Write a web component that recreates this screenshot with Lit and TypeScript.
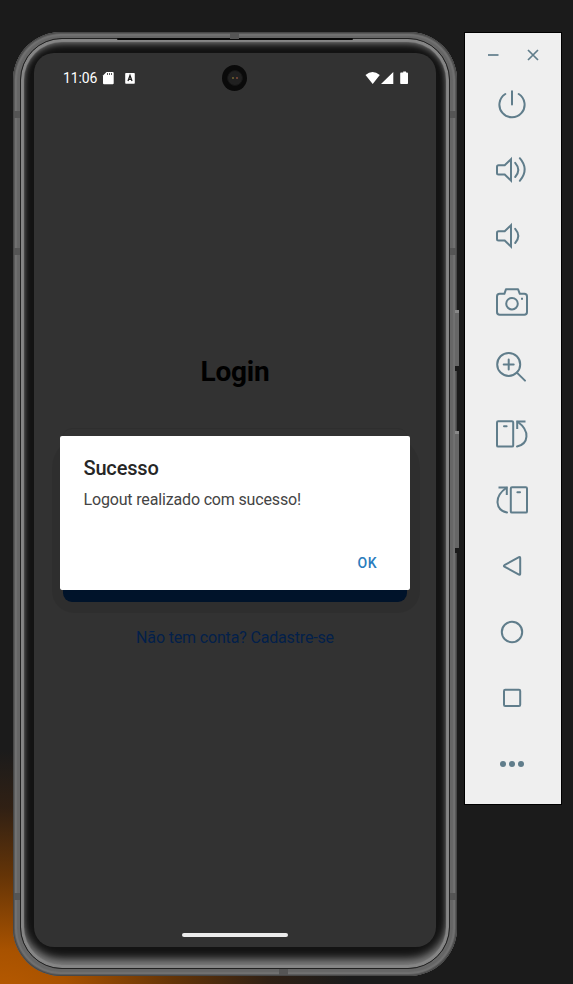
import { LitElement, html, css, svg } from "lit";
import { customElement } from "lit/decorators.js";

@customElement("phone-screen")
class PhoneScreen extends LitElement {
  static styles = css`
    :host { display: block; position: relative; width: 402px; height: 894px; background: #323232; border-radius: 20px; overflow: hidden; font-family: Roboto, sans-serif; }
    .status { height: 50px; box-sizing: border-box; padding: 0 27px 0 29px; display: flex; align-items: center; justify-content: space-between; color: #fff; font-size: 14px; }
    .group { display: flex; align-items: center; }
    .time { letter-spacing: -0.1px; }
    .status svg { display: block; }
    .camera { position: absolute; left: 188px; top: 12px; width: 25px; height: 26px; border-radius: 50%; background: #0a0a0a; display: grid; place-items: center; }
    .lens { width: 14px; height: 14px; border-radius: 50%; background: #202020; border: 1px solid #161616; display: flex; align-items: center; justify-content: center; gap: 2px; }
    .glint { width: 2px; height: 2px; border-radius: 50%; background: #746631; }
    .glint.red { background: #80493a; }
    .page { display: flex; flex-direction: column; align-items: center; padding-top: 252px; }
    h1 { margin: 0; font-size: 28px; line-height: 34px; font-weight: 700; letter-spacing: -0.2px; color: #000; }
    .form { margin-top: 39px; width: 344px; height: 174px; box-sizing: border-box; border: 1px solid #2e2e2e; border-width: 1px 0 0; border-radius: 9px; overflow: hidden; display: flex; align-items: flex-end; }
    .submit { width: 100%; height: 44px; background: #00152e; }
    .link { margin-top: 26px; font-size: 16px; line-height: 20px; letter-spacing: -0.16px; color: #03204a; white-space: nowrap; }
    .shade { position: absolute; left: 18px; top: 383px; width: 368px; height: 177px; border-radius: 32px 32px 22px 22px; background: rgba(0, 0, 0, .07); }
    .dialog { position: absolute; left: 25.5px; top: 383px; width: 350px; height: 154px; box-sizing: border-box; border-radius: 2px; background: #fff; padding: 20px 24px 0; display: flex; flex-direction: column; }
    h2 { margin: 0; font-size: 20px; line-height: 24px; font-weight: 500; letter-spacing: -0.18px; color: #262626; }
    .msg { margin-top: 10px; font-size: 16px; line-height: 20px; letter-spacing: -0.16px; color: #444; }
    .ok { margin: 43px 8px 0 0; align-self: flex-end; font-size: 14px; line-height: 20px; font-weight: 500; letter-spacing: .8px; color: #2a7cbd; }
    .home { position: absolute; left: 147.5px; top: 880px; width: 106px; height: 4px; border-radius: 2px; background: #ececec; }
  `;
  render() {
    return html`
      <div class="status">
        <div class="group">
          <span class="time">11:06</span>
          <svg width="40" height="16" viewBox="0 0 40 16">
            <path fill="#fff" d="M9.5 2H15.7Q16.7 2 16.7 3V13.2Q16.7 14.2 15.7 14.2H7Q6 14.2 6 13.2V5.5Z" />
            <path stroke="#323232" stroke-width=".8" d="M10.5 3V5M12.5 3V5M14.5 3V5" />
            <rect x="28.2" y="3" width="9.6" height="10.8" rx=".8" fill="#fff" />
            <path fill="none" stroke="#222" stroke-width="1.3" d="M31 11L33 5.5L35 11M31.7 9.4H34.3" />
          </svg>
        </div>
        <svg width="44" height="16" viewBox="0 0 44 16">
          <path fill="#fff" d="M.5 5Q7.5-.8 14.8 5L7.7 14ZM16 14L28.3 2V14ZM37 2.6H38.2V1.5H41V2.6H42Q43 2.6 43 3.6V13.2Q43 14 42.2 14H36Q35.2 14 35.2 13.2V3.6Q35.2 2.6 36 2.6Z" />
        </svg>
      </div>
      <div class="camera"><div class="lens"><i class="glint"></i><i class="glint red"></i></div></div>
      <div class="page">
        <h1>Login</h1>
        <div class="form"><div class="submit"></div></div>
        <div class="link">Não tem conta? Cadastre-se</div>
      </div>
      <div class="shade"></div>
      <div class="dialog">
        <h2>Sucesso</h2>
        <div class="msg">Logout realizado com sucesso!</div>
        <div class="ok">OK</div>
      </div>
      <div class="home"></div>
    `;
  }
}

const speaker = svg`<path stroke-linejoin="miter" d="M19 9.2L12.7 15.3H6.5Q5 15.3 5 16.8V23Q5 24.5 6.5 24.5H12.7L19 30.6Z"/><path d="M23.2 12.8Q29.4 19.8 23.2 27"/>`;
const device = svg`<rect x="5" y="7.2" width="16.2" height="25.4" rx="1.2"/><path d="M12 12.2H14.6"/>`;
const arrow = svg`<path stroke-linecap="butt" stroke-linejoin="miter" d="M25.2 15V7.4H33.5"/><path d="M25.6 7.8C38.5 17 36.5 30 25 32.6"/>`;

const tools = [
  svg`<path d="M13.3 10A12.6 12.6 0 1 0 26.7 10M20 7.3V20.6"/>`,
  svg`${speaker}<path d="M27.8 8.2Q37.6 19.5 27.8 30.8"/>`,
  speaker,
  svg`<path d="M12.4 11.8L14 7.2H26L27.8 11.8H32.3Q35 11.8 35 14.5V30Q35 32.8 32.3 32.8H7.7Q5 32.8 5 30V14.5Q5 11.8 7.7 11.8Z"/><circle cx="20" cy="21.7" r="5.8"/><path stroke-linecap="butt" d="M29 16.7H31"/>`,
  svg`<circle cx="16.7" cy="16.4" r="11.5"/><path d="M24.9 24.6L33 32.6M11.7 16.4H21.7M16.7 11.4V21.4"/>`,
  svg`${device}${arrow}`,
  svg`<g transform="matrix(-1 0 0 1 40 0)">${device}${arrow}</g>`,
  svg`<path d="M12.4 19.2L27 11.2Q28.2 10.8 28.2 12V27.8Q28.2 29 27 28.6L12.4 20.6Q11.4 19.9 12.4 19.2Z"/>`,
  svg`<circle cx="20" cy="20" r="10.2"/>`,
  svg`<rect x="12" y="11.8" width="16.2" height="16.2" rx="1.2"/>`,
  svg`<g fill="#607d8b" stroke="none"><circle cx="11" cy="20" r="3"/><circle cx="20" cy="20" r="3"/><circle cx="29" cy="20" r="3"/></g>`,
];

@customElement("emulator-toolbar")
class EmulatorToolbar extends LitElement {
  static styles = css`
    :host { display: block; box-sizing: border-box; width: 98px; height: 773px; border: 1px solid #000; background: #efefef; }
    .head { display: flex; justify-content: center; gap: 26px; height: 38px; box-sizing: border-box; padding: 6px 0 0 0; align-items: center; }
    .tool { height: 66px; padding-left: 27px; display: flex; align-items: center; }
    svg { display: block; fill: none; stroke: #607d8b; stroke-width: 2; stroke-linecap: round; stroke-linejoin: round; }
    .head svg { stroke-width: 1.7; stroke-linecap: butt; }
  `;
  render() {
    return html`
      <div class="head">
        <svg width="14" height="14"><path d="M2 7H12.5" /></svg>
        <svg width="14" height="14"><path d="M2 2L12 12M12 2L2 12" /></svg>
      </div>
      ${tools.map((t) => html`<div class="tool"><svg width="40" height="40" viewBox="0 0 40 40">${t}</svg></div>`)}
    `;
  }
}

@customElement("app-root")
class AppRoot extends LitElement {
  static styles = css`
    :host { display: flex; align-items: flex-start; box-sizing: border-box; width: 573px; height: 984px; padding: 32px 0 0 13px; overflow: hidden;
      background: radial-gradient(ellipse 350px 250px at 0 1000px, #b95b00 0%, #a85200 20%, #643407 50%, #302014 77%, transparent 100%), #1b1b1b; }
    .phone { position: relative; box-sizing: border-box; flex: none; width: 444px; height: 944px; padding: 6px 7px 7px; border-radius: 48px;
      background: #666; box-shadow: inset 0 0 0 1px #484848, inset 0 0 0 2px #5b5b5b, inset 0 0 1px 4px #717171; }
    .bezel { box-sizing: border-box; width: 430px; height: 931px; border: 1px solid #222; border-radius: 42px; padding: 14px 13px 21px; background: #131313;
      box-shadow: inset 0 0 0 1px #858585, inset 0 0 1px 3px #868686, inset 0 4px 6px 1px #707070, inset 0 -8px 8px 1px #808080; }
    .key { position: absolute; left: 442px; width: 4px; box-sizing: border-box; background: #666; border-top: 3px solid #888; border-bottom: 5px solid #1a1a1a; }
    .power { top: 278px; height: 61px; }
    .volume { top: 399px; height: 122px; }
    .seam { position: absolute; width: 6px; height: 7px; background: #555; }
    .left { left: 1px; } .right { left: 437px; }
    .s1 { top: 79px; } .s2 { top: 216px; } .s3 { top: 861px; }
    .across { width: 9px; height: 6px; }
    .north { left: 217px; top: 1px; } .south { left: 266px; top: 937px; }
    .earpiece { position: absolute; left: 104px; top: 6px; width: 236px; height: 2px; border-radius: 2px; background: #080808; }
    emulator-toolbar { flex: none; margin-left: 7px; }
  `;
  render() {
    return html`
      <div class="phone">
        <div class="bezel"><phone-screen></phone-screen></div>
        <i class="earpiece"></i>
        <i class="seam left s1"></i><i class="seam left s2"></i><i class="seam left s3"></i>
        <i class="seam right s1"></i><i class="seam right s2"></i><i class="seam right s3"></i>
        <i class="seam across north"></i><i class="seam across south"></i>
        <i class="key power"></i><i class="key volume"></i>
      </div>
      <emulator-toolbar></emulator-toolbar>
    `;
  }
}
